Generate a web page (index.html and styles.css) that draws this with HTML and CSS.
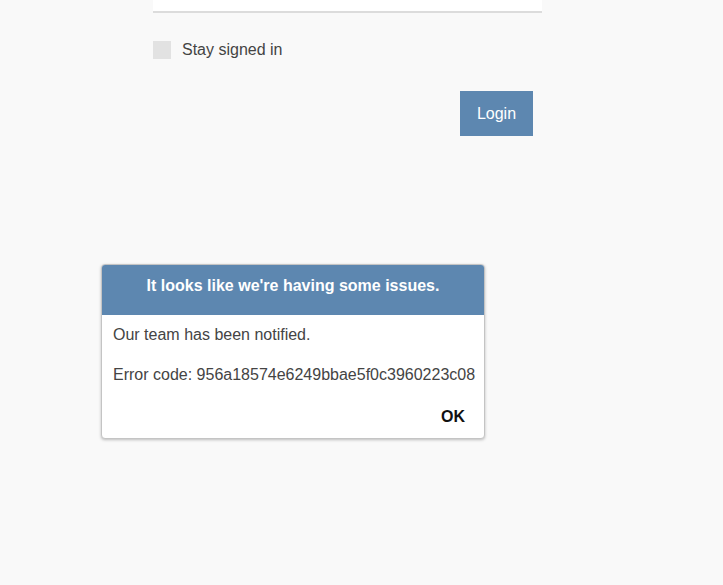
FILE: index.html
```
<!DOCTYPE html>
<html>
<head>
<meta charset="utf-8">
<link rel="stylesheet" href="styles.css">
</head>
<body>
<div class="form">
  <div class="field"></div>
  <label class="remember"><span class="box"></span><span>Stay signed in</span></label>
  <div class="actions"><button class="login">Login</button></div>
</div>
<div class="dialog">
  <div class="dialog-head">It looks like we're having some issues.</div>
  <div class="dialog-body">
    <p class="line">Our team has been notified.</p>
    <p class="line code">Error code: 956a18574e6249bbae5f0c3960223c08</p>
    <div class="dialog-foot"><span class="ok">OK</span></div>
  </div>
</div>
</body>
</html>
```
FILE: styles.css
```
html, body { margin: 0; padding: 0; }
body {
  background: #f9f9f9;
  font-family: "Liberation Sans", Arial, sans-serif;
  width: 723px;
  height: 585px;
  position: relative;
  overflow: hidden;
}
.form {
  margin-left: 153px;
  width: 389px;
}
.field {
  height: 11px;
  background: #fff;
  border-bottom: 2px solid #dcdcdc;
}
.remember {
  display: flex;
  align-items: center;
  margin-top: 28px;
  height: 18px;
  font-size: 16px;
  color: #444;
}
.box {
  width: 18px;
  height: 18px;
  background: #e2e2e2;
  margin-right: 11px;
}
.actions {
  display: flex;
  justify-content: flex-end;
  padding-right: 9px;
  margin-top: 32px;
}
.login {
  width: 73px;
  height: 45px;
  border: 0;
  background: #5d87b0;
  color: #fff;
  font-family: "Liberation Sans", Arial, sans-serif;
  font-size: 16px;
  padding: 0;
}
.dialog {
  position: absolute;
  left: 101px;
  top: 264px;
  width: 382px;
  height: 173px;
  background: #fff;
  border: 1px solid #c4c4c4;
  border-radius: 4px;
  box-shadow: 0 1px 3px rgba(0,0,0,0.25);
  overflow: hidden;
}
.dialog-head {
  background: #5d87b0;
  color: #fff;
  font-weight: bold;
  font-size: 16px;
  line-height: 18px;
  text-align: center;
  height: 50px;
  box-sizing: border-box;
  padding-top: 12px;
}
.dialog-body {
  padding: 11px 10px 0 11px;
  color: #444;
  font-size: 16px;
  line-height: 18px;
}
.line { margin: 0; white-space: nowrap; }
.code { margin-top: 22px; }
.dialog-foot {
  display: flex;
  justify-content: flex-end;
  margin-top: 24px;
  padding-right: 9px;
}
.ok {
  font-weight: bold;
  color: #111;
}
```
